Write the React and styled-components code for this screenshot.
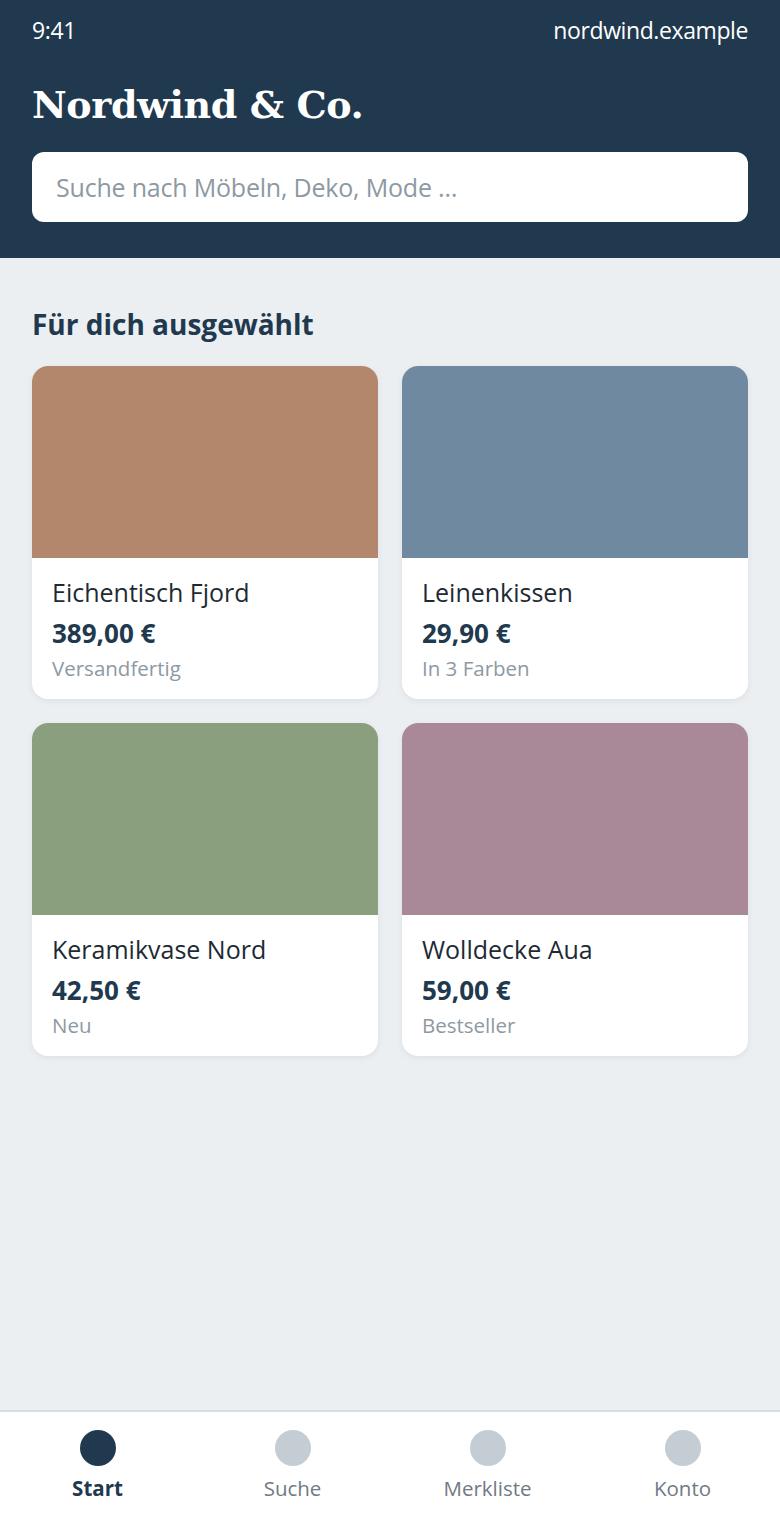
import React from "react";
import styled, { createGlobalStyle } from "styled-components";

const GlobalStyle = createGlobalStyle`
  html, body {
    margin: 0;
    padding: 0;
    background: #eceff2;
  }
  body {
    font-family: "Open Sans", "Noto Sans", sans-serif;
  }
  * {
    box-sizing: border-box;
  }
`;

const Screen = styled.div`
  width: 780px;
  height: 1520px;
  display: flex;
  flex-direction: column;
  background: #eceff2;
`;

const Header = styled.header`
  background: #20394e;
  padding: 14px 32px 36px;
  color: #fff;
`;

const StatusBar = styled.div`
  display: flex;
  justify-content: space-between;
  align-items: center;
  font-size: 23px;
  height: 32px;
  letter-spacing: -0.4px;
`;

const Brand = styled.h1`
  margin: 36px 0 24px;
  font-family: "DejaVu Serif", "Liberation Serif", serif;
  font-weight: 700;
  font-size: 38px;
  line-height: 46px;
  letter-spacing: -0.4px;
`;

const Search = styled.div`
  height: 70px;
  background: #fff;
  border-radius: 12px;
  display: flex;
  align-items: center;
  padding: 0 24px;
  font-size: 25px;
  letter-spacing: -0.2px;
  color: #8d99a3;
`;

const Main = styled.main`
  flex: 1;
  padding: 46px 32px 0;
`;

const SectionTitle = styled.h2`
  margin: 0 0 22px;
  font-size: 28px;
  line-height: 40px;
  font-weight: 700;
  color: #20394e;
`;

const Grid = styled.div`
  display: grid;
  grid-template-columns: 1fr 1fr;
  gap: 24px;
`;

const Card = styled.div`
  background: #fff;
  border-radius: 16px;
  overflow: hidden;
  box-shadow: 0 2px 6px rgba(32, 57, 78, 0.08);
`;

const Swatch = styled.div`
  height: 192px;
  background: ${(p) => p.$color};
`;

const CardBody = styled.div`
  padding: 16px 20px 15px;
  display: flex;
  flex-direction: column;
`;

const Name = styled.div`
  font-size: 25px;
  line-height: 36px;
  color: #1e2a33;
`;

const Price = styled.div`
  font-size: 26px;
  line-height: 38px;
  font-weight: 700;
  color: #20394e;
  margin-top: 4px;
`;

const Note = styled.div`
  font-size: 20.5px;
  line-height: 32px;
  color: #8d99a3;
`;

const TabBar = styled.nav`
  height: 110px;
  background: #fff;
  border-top: 2px solid #d8dde2;
  display: grid;
  grid-template-columns: repeat(4, 1fr);
`;

const Tab = styled.div`
  display: flex;
  flex-direction: column;
  align-items: center;
  padding-top: 18px;
  gap: 6px;
`;

const Dot = styled.span`
  width: 36px;
  height: 36px;
  border-radius: 50%;
  background: ${(p) => (p.$active ? "#20394e" : "#c4ccd4")};
`;

const TabLabel = styled.span`
  font-size: 20.5px;
  line-height: 32px;
  font-weight: ${(p) => (p.$active ? 700 : 400)};
  color: ${(p) => (p.$active ? "#20394e" : "#6f7a84")};
`;

const products = [
  { name: "Eichentisch Fjord", price: "389,00 €", note: "Versandfertig", color: "#b3876b" },
  { name: "Leinenkissen", price: "29,90 €", note: "In 3 Farben", color: "#6f8aa0" },
  { name: "Keramikvase Nord", price: "42,50 €", note: "Neu", color: "#8a9f7e" },
  { name: "Wolldecke Aua", price: "59,00 €", note: "Bestseller", color: "#a98997" },
];

const tabs = ["Start", "Suche", "Merkliste", "Konto"];

export default function App() {
  return (
    <Screen>
      <GlobalStyle />
      <Header>
        <StatusBar>
          <span>9:41</span>
          <span>nordwind.example</span>
        </StatusBar>
        <Brand>Nordwind &amp; Co.</Brand>
        <Search>Suche nach Möbeln, Deko, Mode …</Search>
      </Header>
      <Main>
        <SectionTitle>Für dich ausgewählt</SectionTitle>
        <Grid>
          {products.map((p) => (
            <Card key={p.name}>
              <Swatch $color={p.color} />
              <CardBody>
                <Name>{p.name}</Name>
                <Price>{p.price}</Price>
                <Note>{p.note}</Note>
              </CardBody>
            </Card>
          ))}
        </Grid>
      </Main>
      <TabBar>
        {tabs.map((t, i) => (
          <Tab key={t}>
            <Dot $active={i === 0} />
            <TabLabel $active={i === 0}>{t}</TabLabel>
          </Tab>
        ))}
      </TabBar>
    </Screen>
  );
}
